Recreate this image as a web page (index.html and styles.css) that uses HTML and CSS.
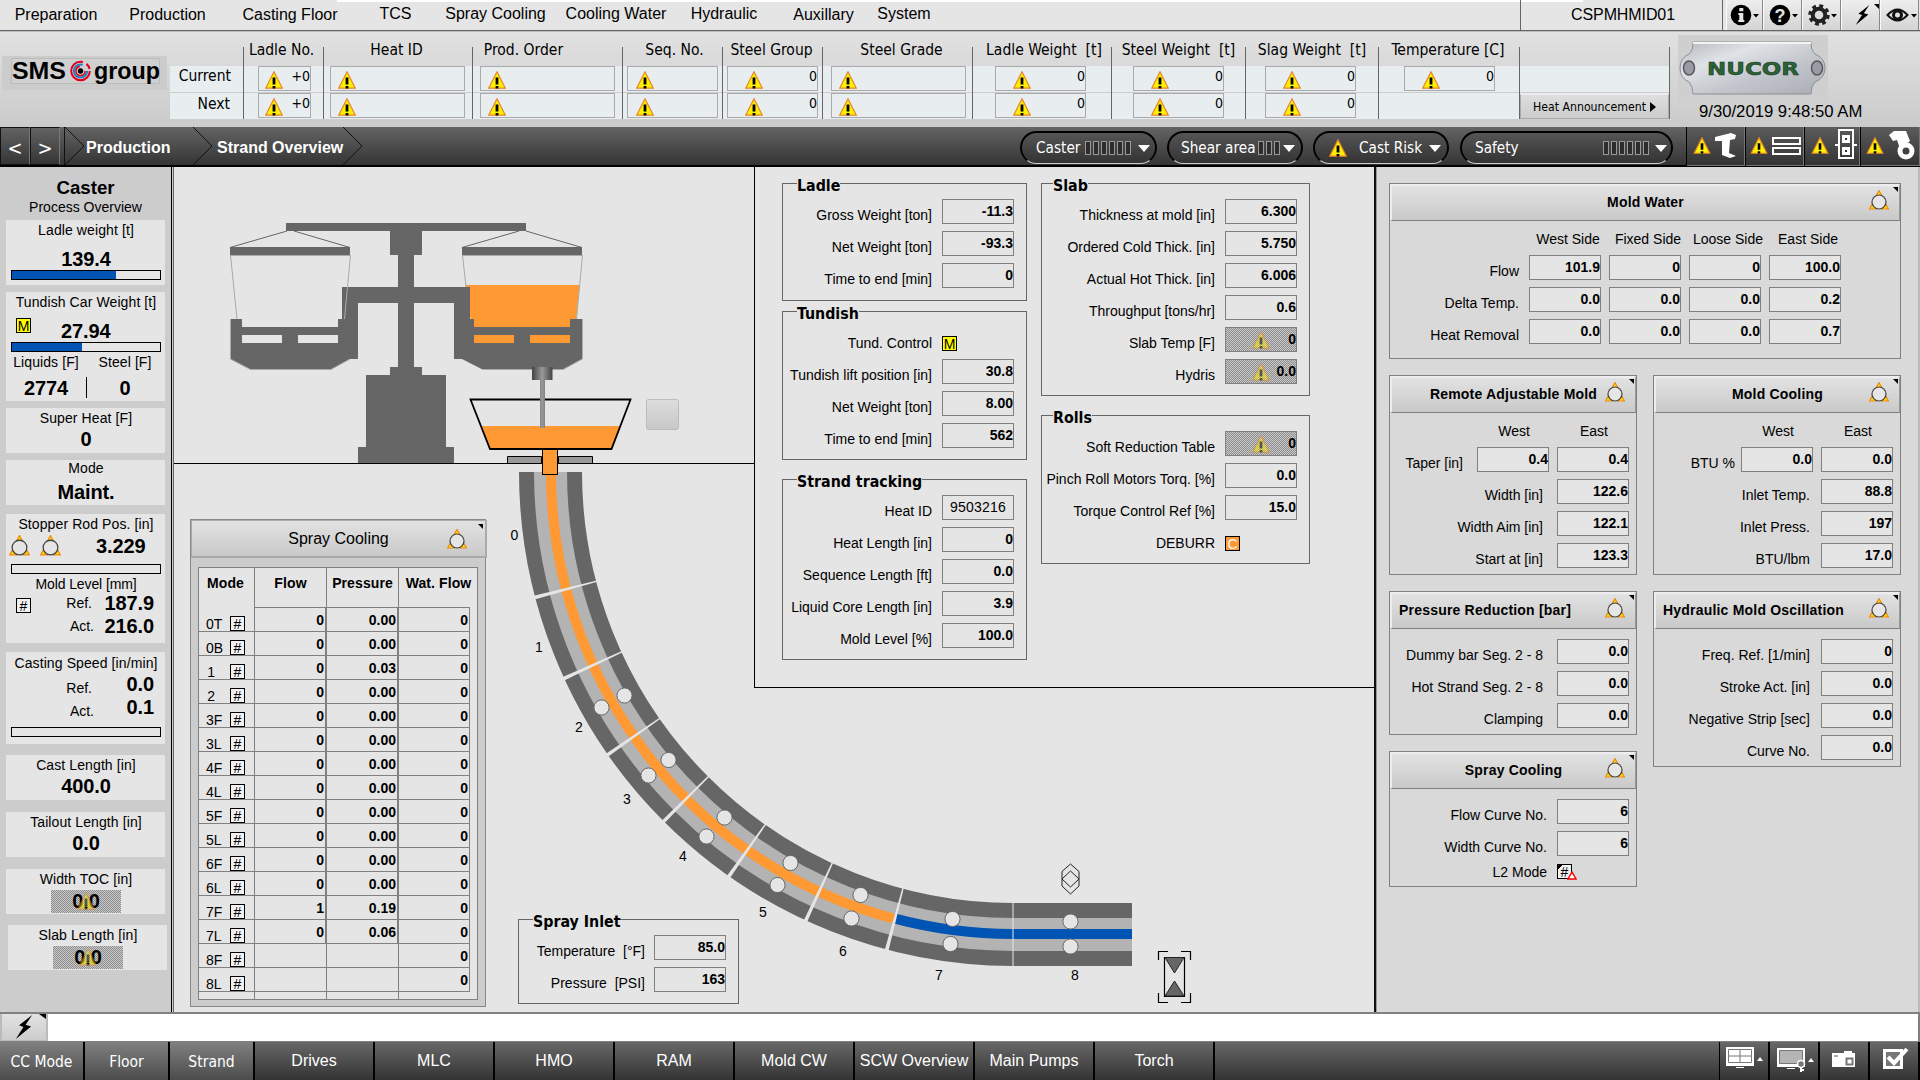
FILE: index.html
```html
<!DOCTYPE html>
<html lang="en">
<head>
<meta charset="utf-8">
<title>Strand Overview</title>
<link rel="stylesheet" href="styles.css">
</head>
<body>
<svg class="defs" width="0" height="0">
  <defs>
    <symbol id="warn" viewBox="0 0 18 18"><path d="M9 .8 17.3 17.2H.7Z" fill="#fff000" stroke="#e8842c" stroke-width="1.2"/><path d="M7.6 6.5h2.8v7H7.6zM7.6 15h2.8v2.6H7.6z" fill="#000"/></symbol>
    <symbol id="alarm" viewBox="0 0 20 20"><path d="M10 .5 13 6H7ZM.6 19 3.8 13 7 19ZM13 19l3.200-6 3.200 6Z" fill="#ffd800" stroke="#ee8a1c" stroke-width="1.200"/><circle cx="10" cy="12" r="7" fill="#e5e5e5" stroke="#444" stroke-width="1.200"/></symbol>
    <symbol id="bolt" viewBox="0 0 16 22"><path d="M15.500 0 3.500 9.500 7.500 11 .5 22 14.500 10.500 9.500 9Z" fill="#000"/></symbol>
    <linearGradient id="steel"><stop offset="0" stop-color="#444"/><stop offset=".5" stop-color="#999"/><stop offset="1" stop-color="#444"/></linearGradient>
    <linearGradient id="btn" x2="0" y2="1"><stop offset="0" stop-color="#ddd"/><stop offset="1" stop-color="#c8c8c8"/></linearGradient>
    <linearGradient id="plate" x2="1" y2="1"><stop offset="0" stop-color="#b4b8bc"/><stop offset=".3" stop-color="#dfe2e6"/><stop offset=".6" stop-color="#c3c6cc"/><stop offset="1" stop-color="#a9acb2"/></linearGradient>
  </defs>
</svg>

<nav class="menu">
  <a class="m1">Preparation</a><a class="m2">Production</a><a class="m3">Casting Floor</a><a class="m4 up">TCS</a><a class="m5 up">Spray Cooling</a><a class="m6 up">Cooling Water</a><a class="m7 up">Hydraulic</a><a class="m8">Auxillary</a><a class="m9 up">System</a>
  <div class="station">CSPMHMID01</div>
  <div class="tools">
    <button class="tool"><svg width="36" height="26"><circle cx="14" cy="13" r="10.300"/><path d="M12.300 6h4v3.200h-4zM11.300 11h5v7h1v2h-6v-2h1v-5h-1z" fill="#e5e5e5"/><path d="M26 12h6l-3 3.500z"/></svg></button>
    <button class="tool"><svg width="36" height="26"><circle cx="16" cy="13" r="10.300"/><text x="16" y="19.500" class="qmark">?</text><path d="M28 12h6l-3 3.500z"/></svg></button>
    <button class="tool"><svg width="36" height="26"><circle cx="16" cy="13" r="9" fill="none" stroke="#222" stroke-width="3.500" stroke-dasharray="3.800 3.270"/><circle cx="16" cy="13" r="6.300" fill="#ddd" stroke="#222" stroke-width="4"/><path d="M28 12h6l-3 3.500z"/></svg></button>
    <button class="tool"><svg width="37" height="26"><use href="#bolt" x="13" y="3" width="15" height="20"/><path d="M32 2h5v5z"/></svg></button>
    <button class="tool"><svg width="37" height="26"><path d="M6.500 13q10-11 20 0-10 11-20 0Z" fill="none" stroke="#111" stroke-width="2"/><circle cx="16.500" cy="13" r="4" fill="none" stroke="#111" stroke-width="3"/><path d="M30 12h6l-3 3.500z"/></svg></button>
  </div>
</nav>

<header class="head">
  <div class="logo"><svg width="168" height="40" viewBox="0 55 168 40">
    <path d="M2 57h165v34H2z" fill="#ccc"/><path d="M11.500 59.500h148v25h-148z" fill="#d0d0d0" stroke="#bbb"/>
    <text x="12" y="79.500" class="sms" textLength="54" lengthAdjust="spacingAndGlyphs">SMS</text>
    <g fill="none"><circle cx="80.500" cy="72" r="9.300" stroke="#e1001a" stroke-width="2" stroke-dasharray="46 4 6 3"/><circle cx="80.500" cy="72" r="6.500" stroke="#1b7fc4" stroke-width="2.200" stroke-dasharray="32 9"/><circle cx="80.500" cy="72" r="4.500" stroke="#e1001a" stroke-width="1.500" stroke-dasharray="20 8"/></g><circle cx="80.500" cy="72" r="2.700"/>
    <text x="94" y="79.500" class="sms" textLength="66" lengthAdjust="spacingAndGlyphs">group</text>
  </svg></div>
  <div class="heats">
    <div class="col c0"><b></b><p>Current</p><p class="nx">Next</p></div>
    <div class="col c1"><b>Ladle No.</b><p class="f"><svg class="w"><use href="#warn"/></svg>+0</p><p class="f"><svg class="w"><use href="#warn"/></svg>+0</p></div>
    <div class="col c2"><b>Heat ID</b><p class="f"><svg class="w"><use href="#warn"/></svg></p><p class="f"><svg class="w"><use href="#warn"/></svg></p></div>
    <div class="col c3"><b>Prod. Order</b><p class="f"><svg class="w"><use href="#warn"/></svg></p><p class="f"><svg class="w"><use href="#warn"/></svg></p></div>
    <div class="col c4"><b>Seq. No.</b><p class="f"><svg class="w"><use href="#warn"/></svg></p><p class="f"><svg class="w"><use href="#warn"/></svg></p></div>
    <div class="col c5"><b>Steel Group</b><p class="f"><svg class="w"><use href="#warn"/></svg>0</p><p class="f"><svg class="w"><use href="#warn"/></svg>0</p></div>
    <div class="col c6"><b>Steel Grade</b><p class="f"><svg class="w"><use href="#warn"/></svg></p><p class="f"><svg class="w"><use href="#warn"/></svg></p></div>
    <div class="col c7"><b>Ladle Weight&nbsp; [t]</b><p class="f"><svg class="w"><use href="#warn"/></svg>0</p><p class="f"><svg class="w"><use href="#warn"/></svg>0</p></div>
    <div class="col c8"><b>Steel Weight&nbsp; [t]</b><p class="f"><svg class="w"><use href="#warn"/></svg>0</p><p class="f"><svg class="w"><use href="#warn"/></svg>0</p></div>
    <div class="col c9"><b>Slag Weight&nbsp; [t]</b><p class="f"><svg class="w"><use href="#warn"/></svg>0</p><p class="f"><svg class="w"><use href="#warn"/></svg>0</p></div>
    <div class="col c10"><b>Temperature [C]</b><p class="f"><svg class="w"><use href="#warn"/></svg>0</p></div>
    <div class="col c11"><button class="announce">Heat Announcement<svg width="6" height="10"><path d="M0 0 6 5 0 10z"/></svg></button></div>
  </div>
  <div class="brand">
    <svg width="150" height="68" viewBox="1678 35 150 68">
      <path d="M1678 35h150v67h-150z" fill="#cfcfcf"/>
      <path d="M1693 42H1811Q1811 51 1815 54 1825 58 1825 68T1815 82Q1811 86 1811 94H1693Q1693 86 1689 82 1680 78 1680 68T1689 54Q1693 51 1693 42Z" fill="url(#plate)" stroke="#8b9097"/>
      <path d="M1693 43H1811" stroke="#f4f4f4" stroke-width="2"/>
      <g fill="#999ca2" stroke="#555a60" stroke-width="1.500"><ellipse cx="1689" cy="68" rx="5.500" ry="7"/><ellipse cx="1817" cy="68" rx="5.500" ry="7"/></g>
      <text x="1707" y="74.500" class="nucor" textLength="92" lengthAdjust="spacingAndGlyphs">NUCOR</text>
    </svg>
    <time>9/30/2019 9:48:50 AM</time>
  </div>
</header>

<div class="bar">
  <button class="hist">&lt;</button><button class="hist">&gt;</button>
  <div class="crumbs">
    <span class="cr1">Production</span><span class="cr2">Strand Overview</span>
    <svg width="320" height="38"><g fill="none" stroke="#111"><path d="M4.500 0v38M5 0 24 19 5 38M133 0 152 19 133 38M283 0 302 19 283 38"/></g></svg>
  </div>
  <div class="pill p1"><span>Caster</span><i class="seg"></i><svg width="12" height="7"><path d="M0 0h12L6 7z"/></svg></div>
  <div class="pill p2"><span>Shear area</span><i class="seg"></i><svg width="12" height="7"><path d="M0 0h12L6 7z"/></svg></div>
  <div class="pill p3"><svg class="w"><use href="#warn"/></svg><span>Cast Risk</span><svg width="12" height="7"><path d="M0 0h12L6 7z"/></svg></div>
  <div class="pill p4"><span>Safety</span><i class="seg"></i><svg width="12" height="7"><path d="M0 0h12L6 7z"/></svg></div>
  <div class="stats">
    <div class="stat s1"><svg width="56" height="38"><use href="#warn" x="6" y="10" width="18" height="17"/><path d="M28 10 44 6 49 8 48 12 43 13 42 26 49 29 43 31 35 28V14L28 14Z" fill="#fff"/></svg></div>
    <div class="stat s2"><svg width="56" height="38"><use href="#warn" x="4" y="10" width="18" height="17"/><path d="M27 11h27v6H27zM27 21h27v6H27z" fill="none" stroke="#fff" stroke-width="2"/></svg></div>
    <div class="stat s3"><svg width="54" height="38"><use href="#warn" x="6" y="10" width="18" height="17"/><path d="M34 3h14v28H34zM30 18h4M48 18h4" fill="none" stroke="#fff" stroke-width="2"/><path d="M37 8h8v8h-8zM37 20h8v8h-8z" fill="#fff"/><path d="M40 11h2v2h-2zM40 23h2v2h-2z" fill="#333"/></svg></div>
    <div class="stat s4"><svg width="57" height="38"><use href="#warn" x="5" y="10" width="18" height="17"/><path d="M28 8 33 4H45L49 14 39 22 36 13 32 14Z" fill="#fff"/><circle cx="45" cy="24" r="6" fill="none" stroke="#fff" stroke-width="5"/></svg></div>
  </div>
</div>

<main class="main">
<aside class="left">
  <h2>Caster</h2><h3>Process Overview</h3>
  <section class="card k1"><label>Ladle weight [t]</label><strong>139.4</strong><div class="gauge"><i style="width:104px"></i></div></section>
  <section class="card k2"><label>Tundish Car Weight [t]</label><div class="tcw"><span class="box yel">M</span><strong>27.94</strong></div><div class="gauge"><i style="width:70px"></i></div>
    <div class="pair"><div><label>Liquids [F]</label><strong>2774</strong></div><div><label>Steel [F]</label><strong>0</strong></div></div></section>
  <section class="card k3"><label>Super Heat [F]</label><strong>0</strong></section>
  <section class="card k3 k4"><label>Mode</label><strong>Maint.</strong></section>
  <section class="card k5"><label>Stopper Rod Pos. [in]</label>
    <div class="rod"><svg class="al"><use href="#alarm"/></svg><svg class="al"><use href="#alarm"/></svg><strong>3.229</strong></div>
    <div class="gauge"></div><label class="ml">Mold Level [mm]</label>
    <div class="refs"><span class="box">#</span><div><em>Ref.</em><em>Act.</em></div><div><strong>187.9</strong><strong>216.0</strong></div></div></section>
  <section class="card k6"><label>Casting Speed [in/min]</label>
    <div class="refs"><div><em>Ref.</em><em>Act.</em></div><div><strong>0.0</strong><strong>0.1</strong></div></div><div class="gauge"></div></section>
  <section class="card k3 k7"><label>Cast Length [in]</label><strong>400.0</strong></section>
  <section class="card k3 k8"><label>Tailout Length [in]</label><strong>0.0</strong></section>
  <section class="card k3 k9"><label>Width TOC [in]</label><strong class="off">0.0<svg class="w"><use href="#warn"/></svg></strong></section>
  <section class="card k3 k10"><label>Slab Length [in]</label><strong class="off">0.0<svg class="w"><use href="#warn"/></svg></strong></section>
</aside>

<div class="canvas">
  <svg class="plant" width="1200" height="845" viewBox="174 167 1200 845">
    <path d="M174 463.500H754" stroke="#000"/>
    <path d="M465.600 285H579.500L574 343H474Z" fill="#f93"/>
    <g fill="#666">
      <path d="M286 223h240v8H422v24h-8v32h56v72h-16v-56h-40v64h8v8h24v72h8v16h-96v-16h8v-72h24v-8h8v-64h-40v56h-16v-72h56v-32h-8v-24H286z"/>
      <path id="lid" d="M230 247h120v8H230z"/>
      <path id="cup" fill-rule="evenodd" d="M230 319h12v8h96v-8h12v40l-19 10.500h-80.500L230 359zM242 335v8h40v-8zM298 335v8h40v-8z"/>
      <use href="#lid" x="232"/><use href="#cup" x="232"/>
    </g>
    <g fill="none" stroke="#666"><path d="M287 231 230 247.500M294 231 350 247.500M519 231 462 247.500M526 231 582 247.500"/><path stroke="#aaa" d="M230.500 255 237 319M350.500 255 344.500 319M230 255.500H350M462.500 255 466 287M582.500 255 576.500 319M462 255.500H582M230.500 319V359L250.500 369.500H331L350 359M582.500 319V359L563 369.500H482.500"/></g>
    <path d="M481.500 426H620L611.500 448H490Z" fill="#f93"/>
    <path d="M470.500 399.500H630.500L611.500 449H490Z" fill="none" stroke="#000" stroke-width="1.800"/>
    <path d="M532 367h20.500v13H532zM540 380h5v48h-5z" fill="url(#steel)"/>
    <path d="M507.500 456.500h34v7h-34zM558.500 456.500h34v7h-34z" fill="#999" stroke="#000"/>
    <rect x="646.500" y="399.500" width="32" height="30" rx="2" fill="url(#btn)" stroke="#bbb"/>
    <g fill="none">
      <path d="M550.500 472A462.500 462.500 0 0 0 1013 934.500H1132" stroke="#666" stroke-width="63"/>
      <path d="M550.500 472A462.500 462.500 0 0 0 1013 934.500H1132" stroke="#b3b3b3" stroke-width="33"/>
      <path d="M551 472A462 462 0 0 0 895 919" stroke="#f93" stroke-width="10"/>
      <path d="M895 918.700A462 462 0 0 0 1013 934H1132" stroke="#0054b4" stroke-width="10"/>
    </g>
    <g fill="#e5e5e5" transform="translate(1013 472)">
      <path d="M-496-1.900-430-.7V.7L-496 1.900Z" transform="rotate(-14.700)"/>
      <path d="M-496-1.900-430-.7V.7L-496 1.900Z" transform="rotate(-24.700)"/>
      <path d="M-496-1.900-430-.7V.7L-496 1.900Z" transform="rotate(-34.900)"/>
      <path d="M-496-1.900-430-.7V.7L-496 1.900Z" transform="rotate(-45)"/>
      <path d="M-496-1.900-430-.7V.7L-496 1.900Z" transform="rotate(-54.900)"/>
      <path d="M-496-1.900-430-.7V.7L-496 1.900Z" transform="rotate(-65.200)"/>
      <path d="M-496-1.900-430-.7V.7L-496 1.900Z" transform="rotate(-75.200)"/>
      <path d="M-.5 430h1v66h-1z"/>
    </g>
    <rect x="542.500" y="449.500" width="15" height="25" fill="#f93" stroke="#000"/>
    <g fill="#e5e5e5" stroke="#666">
      <circle cx="601.500" cy="707.500" r="7.600"/><circle cx="624.500" cy="695.500" r="7.600"/><circle cx="648.500" cy="775.500" r="7.600"/><circle cx="668.500" cy="760" r="7.600"/><circle cx="706.500" cy="836.500" r="7.600"/><circle cx="724.500" cy="817.500" r="7.600"/><circle cx="777.500" cy="885" r="7.600"/><circle cx="790.500" cy="863" r="7.600"/><circle cx="851.500" cy="918.500" r="7.600"/><circle cx="860.500" cy="895" r="7.600"/><circle cx="950.500" cy="944" r="7.600"/><circle cx="952.500" cy="919" r="7.600"/><circle cx="1070.500" cy="946.500" r="7.600"/><circle cx="1070.500" cy="921.500" r="7.600"/>
    </g>
    <g class="segno"><text x="514.500" y="540">0</text><text x="539" y="652">1</text><text x="579" y="732">2</text><text x="627" y="804">3</text><text x="683" y="860.500">4</text><text x="763" y="916.500">5</text><text x="843" y="956">6</text><text x="939" y="980">7</text><text x="1075" y="980">8</text></g>
    <path d="M1070.500 864 1079 871.500V886L1070.500 894 1062 886V871.500ZM1070.500 871 1079 879 1070.500 887 1062 879Z" fill="none" stroke="#222"/>
    <path d="M1158.500 960V951.500H1168M1181 951.500H1190.500V960M1158.500 993V1002.500H1168M1181 1002.500H1190.500V993M1164.500 957.500h20v39h-20z" fill="none" stroke="#000" stroke-width="1.200"/>
    <path d="M1165 957.500h19L1174.500 973ZM1165 996h19L1174.500 981Z" fill="#666" stroke="#222"/>
  </svg>

  <div class="info">
    <div>
      <fieldset class="grp g1"><b class="lg">Ladle</b>
        <div class="row"><span>Gross Weight [ton]</span><output>-11.3</output></div>
        <div class="row"><span>Net Weight [ton]</span><output>-93.3</output></div>
        <div class="row"><span>Time to end [min]</span><output>0</output></div></fieldset>
      <fieldset class="grp g2"><b class="lg">Tundish</b>
        <div class="row"><span>Tund. Control</span><div class="slot"><i class="box yel">M</i></div></div>
        <div class="row"><span>Tundish lift position [in]</span><output>30.8</output></div>
        <div class="row"><span>Net Weight [ton]</span><output>8.00</output></div>
        <div class="row"><span>Time to end [min]</span><output>562</output></div></fieldset>
      <fieldset class="grp g3"><b class="lg">Strand tracking</b>
        <div class="row"><span>Heat ID</span><output class="plain">9503216</output></div>
        <div class="row"><span>Heat Length [in]</span><output>0</output></div>
        <div class="row"><span>Sequence Length [ft]</span><output>0.0</output></div>
        <div class="row"><span>Liquid Core Length [in]</span><output>3.9</output></div>
        <div class="row"><span>Mold Level [%]</span><output>100.0</output></div></fieldset>
    </div>
    <div>
      <fieldset class="grp g4"><b class="lg">Slab</b>
        <div class="row"><span>Thickness at mold [in]</span><output>6.300</output></div>
        <div class="row"><span>Ordered Cold Thick. [in]</span><output>5.750</output></div>
        <div class="row"><span>Actual Hot Thick. [in]</span><output>6.006</output></div>
        <div class="row"><span>Throughput [tons/hr]</span><output>0.6</output></div>
        <div class="row"><span>Slab Temp [F]</span><output class="off"><svg class="w"><use href="#warn"/></svg>0</output></div>
        <div class="row"><span>Hydris</span><output class="off"><svg class="w"><use href="#warn"/></svg>0.0</output></div></fieldset>
      <fieldset class="grp g5"><b class="lg">Rolls</b>
        <div class="row"><span>Soft Reduction Table</span><output class="off"><svg class="w"><use href="#warn"/></svg>0</output></div>
        <div class="row"><span>Pinch Roll Motors Torq. [%]</span><output>0.0</output></div>
        <div class="row"><span>Torque Control Ref [%]</span><output>15.0</output></div>
        <div class="row"><span>DEBURR</span><div class="slot"><i class="box ora">C</i></div></div></fieldset>
    </div>
  </div>

  <div class="lower">
    <section class="spray">
      <div class="sphead">Spray Cooling<svg class="al"><use href="#alarm"/></svg></div>
      <div class="tbl">
        <div class="tr th"><b>Mode</b><b>Flow</b><b>Pressure</b><b>Wat. Flow</b></div>
        <div class="tr"><span>0T<i class="box">#</i></span><b>0</b><b>0.00</b><b>0</b></div>
        <div class="tr"><span>0B<i class="box">#</i></span><b>0</b><b>0.00</b><b>0</b></div>
        <div class="tr"><span>&hairsp;1<i class="box">#</i></span><b>0</b><b>0.03</b><b>0</b></div>
        <div class="tr"><span>&hairsp;2<i class="box">#</i></span><b>0</b><b>0.00</b><b>0</b></div>
        <div class="tr"><span>3F<i class="box">#</i></span><b>0</b><b>0.00</b><b>0</b></div>
        <div class="tr"><span>3L<i class="box">#</i></span><b>0</b><b>0.00</b><b>0</b></div>
        <div class="tr"><span>4F<i class="box">#</i></span><b>0</b><b>0.00</b><b>0</b></div>
        <div class="tr"><span>4L<i class="box">#</i></span><b>0</b><b>0.00</b><b>0</b></div>
        <div class="tr"><span>5F<i class="box">#</i></span><b>0</b><b>0.00</b><b>0</b></div>
        <div class="tr"><span>5L<i class="box">#</i></span><b>0</b><b>0.00</b><b>0</b></div>
        <div class="tr"><span>6F<i class="box">#</i></span><b>0</b><b>0.00</b><b>0</b></div>
        <div class="tr"><span>6L<i class="box">#</i></span><b>0</b><b>0.00</b><b>0</b></div>
        <div class="tr"><span>7F<i class="box">#</i></span><b>1</b><b>0.19</b><b>0</b></div>
        <div class="tr"><span>7L<i class="box">#</i></span><b>0</b><b>0.06</b><b>0</b></div>
        <div class="tr e"><span>8F<i class="box">#</i></span><b></b><b></b><b>0</b></div>
        <div class="tr e"><span>8L<i class="box">#</i></span><b></b><b></b><b>0</b></div>
        <div class="tail"><b></b><b></b><b></b><b></b></div>
      </div>
    </section>
    <fieldset class="grp inlet"><b class="lg">Spray Inlet</b>
      <div class="row"><span>Temperature&nbsp; [°F]</span><output>85.0</output></div>
      <div class="row"><span>Pressure&nbsp; [PSI]</span><output>163</output></div></fieldset>
  </div>
</div>

<aside class="right">
  <section class="pn water"><h4>Mold Water<svg class="al"><use href="#alarm"/></svg></h4>
    <div class="heads"><span>West Side</span><span>Fixed Side</span><span>Loose Side</span><span>East Side</span></div>
    <div class="row"><span>Flow</span><output>101.9</output><output>0</output><output>0</output><output>100.0</output></div>
    <div class="row"><span>Delta Temp.</span><output>0.0</output><output>0.0</output><output>0.0</output><output>0.2</output></div>
    <div class="row"><span>Heat Removal</span><output>0.0</output><output>0.0</output><output>0.0</output><output>0.7</output></div></section>
  <div class="cols">
    <div>
      <section class="pn ram"><h4>Remote Adjustable Mold<svg class="al"><use href="#alarm"/></svg></h4>
        <div class="heads"><span>West</span><span>East</span></div>
        <div class="row"><span>Taper [in]</span><output>0.4</output><output>0.4</output></div>
        <div class="row"><span>Width [in]</span><output>122.6</output></div>
        <div class="row"><span>Width Aim [in]</span><output>122.1</output></div>
        <div class="row"><span>Start at [in]</span><output>123.3</output></div></section>
      <section class="pn pres"><h4 class="lft">Pressure Reduction [bar]<svg class="al"><use href="#alarm"/></svg></h4>
        <div class="row"><span>Dummy bar Seg. 2 - 8</span><output>0.0</output></div>
        <div class="row"><span>Hot Strand Seg. 2 - 8</span><output>0.0</output></div>
        <div class="row"><span>Clamping</span><output>0.0</output></div></section>
      <section class="pn sc"><h4>Spray Cooling<svg class="al"><use href="#alarm"/></svg></h4>
        <div class="row"><span>Flow Curve No.</span><output>6</output></div>
        <div class="row"><span>Width Curve No.</span><output>6</output></div>
        <div class="row l2"><span>L2 Mode</span><div class="slot"><i class="box">#</i><svg width="10" height="9"><path d="M5 1 9 8H1Z" fill="#fff" stroke="red" stroke-width="1.500"/></svg></div></div></section>
    </div>
    <div>
      <section class="pn ram mc"><h4>Mold Cooling<svg class="al"><use href="#alarm"/></svg></h4>
        <div class="heads"><span>West</span><span>East</span></div>
        <div class="row btu"><span>BTU %</span><output>0.0</output><output>0.0</output></div>
        <div class="row"><span>Inlet Temp.</span><output>88.8</output></div>
        <div class="row"><span>Inlet Press.</span><output>197</output></div>
        <div class="row"><span>BTU/lbm</span><output>17.0</output></div></section>
      <section class="pn hmo"><h4 class="lft">Hydraulic Mold Oscillation<svg class="al"><use href="#alarm"/></svg></h4>
        <div class="row"><span>Freq. Ref. [1/min]</span><output>0</output></div>
        <div class="row"><span>Stroke Act. [in]</span><output>0.0</output></div>
        <div class="row"><span>Negative Strip [sec]</span><output>0.0</output></div>
        <div class="row"><span>Curve No.</span><output>0.0</output></div></section>
    </div>
  </div>
</aside>
</main>

<div class="msg"><button><svg width="44" height="26"><use href="#bolt" x="13" y="1" width="18" height="24"/><path d="M37 0h7v5z"/></svg></button></div>

<footer class="foot">
  <a class="n">CC Mode</a><a class="n">Floor</a><a class="n">Strand</a><a class="dn">Drives</a><a>MLC</a><a>HMO</a><a>RAM</a><a>Mold CW</a><a>SCW Overview</a><a>Main Pumps</a><a>Torch</a>
  <div class="sp"></div>
  <i><svg width="48" height="38"><path d="M6 5h28v19H6zM16 25h8v1h-8z" fill="#fff"/><path d="M8.500 7.500h23v13h-23zM20 8v12M9 14h22" fill="none" stroke="#777"/><path d="M37 19h6l-3-4z" fill="#fff"/></svg></i>
  <i><svg width="48" height="38"><path d="M7 6h28v19H7zM17 26h8v1h-8z" fill="#fff"/><path d="M9.500 8.500h23v13h-23z" fill="#b5b5b5" stroke="#777"/><circle cx="31" cy="22" r="3.500" fill="#777" stroke="#fff" stroke-width="1.500"/><path d="M30 25h2v5h-2zM32 27h2v2h-2z" fill="#fff"/><path d="M38 20h6l-3-4z" fill="#fff"/></svg></i>
  <i><svg width="48" height="38"><path d="M12 11h12V9h8v2h3v14H12z" fill="#fff"/><path d="M14 14h4" stroke="#555"/><rect x="26.500" y="16.500" width="6" height="6" fill="#fff" stroke="#777" stroke-width="2"/></svg></i>
  <i><svg width="48" height="38"><path d="M13 7h20v20H13z" fill="#fff"/><path d="M16 10h14v14H16z" fill="#777"/><path d="M18 15 24 21 37 7" fill="none" stroke="#fff" stroke-width="4"/></svg></i>
</footer>
</body>
</html>
```

FILE: styles.css
```css
* { box-sizing: border-box; }
body { margin: 0; width: 1920px; height: 1080px; overflow: hidden; display: flex; flex-direction: column; background: #ccc; color: #000; font: 14px "Liberation Sans", Arial, sans-serif; }
.defs { position: absolute; }
button { font: inherit; padding: 0; margin: 0; border: 0; background: none; color: inherit; display: block; }
svg { display: block; flex: none; }
p, h2, h3, h4, fieldset { margin: 0; padding: 0; min-width: 0; }
i, em { font-style: normal; }
svg.w { width: 18px; height: 18px; }
svg.al { width: 20px; height: 20px; }

/* menu */
.menu { height: 31px; flex: none; display: flex; border-bottom: 1px solid #666; background: linear-gradient(#fff, #fff) 337px 0 / 1246px 2px no-repeat #e5e5e5; font-size: 16px; line-height: 30px; }
.menu a { text-align: center; white-space: nowrap; }
.menu a.up { line-height: 28px; }
.m1 { width: 112px; } .m2 { width: 111px; } .m3 { width: 134px; } .m4 { width: 77px; } .m5 { width: 123px; } .m6 { width: 118px; } .m7 { width: 98px; } .m8 { width: 101px; } .m9 { width: 60px; }
.station { margin-left: auto; width: 203px; border: 1px solid #666; border-width: 0 1px; text-align: center; letter-spacing: -.1px; padding-left: 3px; }
.tools { display: flex; padding-left: 3px; width: 197px; }
.tool { width: 39px; height: 30px; flex: none; border-left: 1px solid #fafafa; border-right: 1px solid #888; background: linear-gradient(#eee, #d4d4d4); }
.tool:first-child { width: 37px; }
.qmark { font: bold 18px "Liberation Sans", sans-serif; fill: #e5e5e5; text-anchor: middle; }

/* header */
.head { height: 96px; flex: none; display: flex; border-top: 1px solid #bbb; background: linear-gradient(#e1e1e1, #cbcbcb); }
.logo { width: 170px; padding-top: 22px; }
.sms { font: bold 24px "Liberation Sans", sans-serif; }
.heats { width: 1500px; display: flex; font: 15.500px "DejaVu Sans Condensed", "DejaVu Sans", sans-serif; background: linear-gradient(transparent 34px, #e8eef0 34px, #e8eef0 60px, #ccc 60px, #ccc 61px, #e8eef0 61px, #e8eef0 87px, transparent 87px); }
.col { margin-top: 15px; height: 72px; border-left: 1px solid #666; flex: none; }
.col b { display: block; height: 27px; margin-top: -8px; line-height: 22px; font-weight: normal; text-align: center; white-space: pre; }
.col p { height: 27px; line-height: 21px; text-align: right; }
.c0 { width: 73px; border-left: 0; padding-right: 12px; }
.c0 .nx { line-height: 23px; padding-right: 1px; }
.col .f { height: 25px; margin-bottom: 2px; line-height: 19px; border: 1px solid #aaa; display: flex; justify-content: space-between; padding-left: 7px; width: 135px; font-size: 14px; }
.f .w { margin-top: 4px; }
.c1 { width: 80px; } .col.c1 .f { margin-left: 14px; width: 53px; padding-left: 6px; } .c1 b { margin-left: -4px; }
.c2 { width: 149px; } .c2 .f { margin-left: 6px; } .c2 b { margin-right: 3px; }
.c3 { width: 150px; } .c3 .f { margin-left: 7px; } .c3 b { padding-right: 48px; }
.c4 { width: 100px; } .col.c4 .f { margin-left: 4px; width: 91px; padding-left: 8px; } .c4 b { margin-left: 4px; }
.c5 { width: 100px; } .col.c5 .f { margin-left: 4px; width: 91px; padding-left: 17px; } .c5 b { margin-right: 2px; }
.c6 { width: 150px; } .c6 .f { margin-left: 8px; } .c6 b { margin-left: 8px; }
.c7 { width: 139px; } .col.c7 .f { margin-left: 22px; width: 91px; padding-left: 17px; } .c7 b { margin-left: 4px; }
.c8 { width: 134px; } .col.c8 .f { margin-left: 21px; width: 91px; padding-left: 17px; }
.c9 { width: 133px; } .col.c9 .f { margin-left: 19px; width: 91px; padding-left: 17px; }
.c10 { width: 141px; } .col.c10 .f { margin-left: 25px; width: 91px; padding-left: 17px; } .c10 b { margin-right: 2px; }
.c11 { width: 151px; border-right: 1px solid #666; padding-top: 47px; }
.announce { width: 149px; height: 25px; display: flex; align-items: center; justify-content: center; gap: 4px; font-size: 12.200px; border: 1px solid #aaa; border-top-color: #eee; background: linear-gradient(#dedede, #ccc); }
.brand { flex: 1; padding: 3px 0 0 8px; }
.nucor { font: bold 17px "DejaVu Sans", sans-serif; fill: #2c6238; stroke: #163a20; stroke-width: .5px; }
.brand time { display: block; font-size: 16.700px; line-height: 18px; padding-left: 21px; }

/* breadcrumb bar */
.bar { height: 40px; flex: none; display: flex; align-items: flex-start; background: linear-gradient(#646464, #343434); border-bottom: 2px solid #000; color: #fff; font: 15.200px "DejaVu Sans Condensed", "DejaVu Sans", sans-serif; }
.hist { width: 30px; height: 38px; border: 1px solid #111; border-right-color: #777; font: 20px/40px "DejaVu Sans Condensed", sans-serif; flex: none; }
.crumbs { width: 960px; height: 38px; font: bold 16px/41px "Liberation Sans", sans-serif; position: relative; display: flex; padding-left: 26px; }
.crumbs svg { position: absolute; left: 0; top: 0; }
.cr1 { width: 131px; }
.pill { height: 33px; margin-top: 4px; border: 2px solid #000; border-bottom: 1px solid #ccc; border-radius: 17px; display: flex; align-items: center; flex: none; background: linear-gradient(#555, #333); padding-left: 14px; white-space: nowrap; }
.pill > svg:not(.w) { fill: #fff; }
.seg { height: 14px; width: 46px; border: 1px solid #999; border-width: 1px 0; background: repeating-linear-gradient(90deg, #999 0 1px, #2d2d2d 1px 5px, #999 5px 6px, transparent 6px 8px); -webkit-mask: repeating-linear-gradient(90deg, #000 0 6px, transparent 6px 8px); mask: repeating-linear-gradient(90deg, #000 0 6px, transparent 6px 8px); }
.p1 { width: 137px; margin-right: 10px; } .p1 .seg { margin: 0 7px 0 5px; }
.p2 { width: 136px; margin-right: 10px; padding-left: 12px; } .p2 .seg { width: 22px; margin: 0 3px 0 2px; }
.p3 { width: 136px; margin-right: 11px; } .p3 span { margin: 0 7px 0 12px; }
.p4 { width: 213px; padding-left: 13px; } .p4 .seg { margin: 0 6px 0 auto; } .p4 > svg { margin-right: 4px; }
.stats { margin-left: auto; display: flex; height: 40px; width: 234px; background: #000; }
.stat { border: 1px solid #777; border-width: 0 1px 1px 0; margin-left: 1px; background: linear-gradient(#5c5c5c, #333); height: 39px; }
.s1 { width: 58px; } .s2 { width: 58px; } .s3 { width: 55px; } .s4 { width: 59px; }

/* main area */
.main { height: 845px; flex: none; display: flex; }
.left { width: 174px; flex: none; background: #ccc; border-right: 1px solid #666; box-shadow: inset -1px 0 #ccc, inset -2px 0 #000; padding: 8px 0 0 6px; }
.left h2 { font-size: 18.700px; line-height: 26px; height: 24px; width: 159px; text-align: center; }
.left h3 { font-size: 14px; font-weight: normal; line-height: 16px; height: 21px; width: 159px; text-align: center; }
.card { width: 159px; background: #e5e5e5; margin-bottom: 7px; padding: 2px 4px 0 5px; text-align: center; }
.card label { display: block; line-height: 16px; letter-spacing: .1px; white-space: nowrap; }
.card strong { display: block; font-size: 20px; line-height: 26px; height: 24px; letter-spacing: -.1px; }
.gauge { height: 10px; border: 1px solid #000; background: #e5e5e5; }
.gauge i { display: block; height: 8px; background: #0054b4; }
.k1 { height: 65px; } .card.k1 strong { padding-top: 10px; line-height: 22px; height: 32px; }
.k2 { height: 109px; }
.tcw { display: flex; height: 32px; padding: 8px 0 0 5px; gap: 30px; } .tcw strong { padding-top: 2px; line-height: 24px; }
.card.k2 .tcw strong { line-height: 23px; }
.pair { display: grid; grid-template-columns: 70px 80px; padding-top: 2px; background: linear-gradient(#000, #000) 75px 25px / 1px 21px no-repeat; height: 50px; }
.card .pair strong { line-height: 36px; height: 34px; } .pair div:last-child label { padding-left: 8px; } .pair div:last-child strong { padding-left: 8px; }
.k3 { height: 45px; } .k4 { margin-bottom: 9px; } .k4 label { line-height: 13px; } .card.k4 strong { line-height: 34px; height: 30px; }
.k5 { height: 129px; margin-bottom: 9px; }
.rod { height: 32px; display: flex; padding-top: 3px; margin-left: -2px; gap: 10px; } .rod strong { margin-left: 25px; margin-top: -2px; }
.rod svg { width: 21px; height: 21px; }
.card .ml { line-height: 20px; letter-spacing: -.1px; }
.refs { display: grid; grid-template-columns: 50px 33px 60px; text-align: right; }
.refs em { display: block; line-height: 23px; } .refs em:first-child { padding-right: 2px; line-height: 19px; padding-bottom: 2px; }
.card .refs strong { line-height: 22px; margin-top: -2px; height: 25px; }
.refs .box { margin: 4px 0 0 5px; }
.k6 { height: 92px; margin-bottom: 11px; } .k6 .refs { grid-template-columns: 83px 60px; height: 56px; padding-top: 4px; } .k6 em { position: relative; top: 4px; } .k6 label { padding-top: 1px; }
.k7, .k8 { margin-bottom: 12px; } .k9 { margin-bottom: 11px; } .k10 { margin-left: 2px; }
.off { background: repeating-conic-gradient(#8e8e8e 0 25%, #c8c8c8 0 50%) 0 0 / 2px 2px; }
.card .off { width: 70px; height: 23px; line-height: 22px; margin: 3px auto 0 40px; position: relative; }
.card .off svg { position: absolute; left: 26px; top: 2px; opacity: .5; }
.box { display: inline-block; width: 15px; height: 15px; border: 1px solid #000; font: 14px/14px "Liberation Sans", sans-serif; text-align: center; background: #f2f2f2; }
.yel { background: #ff0; } .ora { background: #f93; color: #fff; }

.canvas { width: 1200px; flex: none; background: #e5e5e5; position: relative; }
.plant { position: absolute; left: 0; top: 0; }
.segno text { font: 14px "Liberation Sans", sans-serif; text-anchor: middle; }
.info { position: relative; margin-left: 580px; height: 521px; width: 620px; border: 1px solid #000; border-width: 0 0 1px 1px; background: #e5e5e5; display: flex; gap: 14px; padding: 16px 0 0 27px; }
.grp { position: relative; border: 1px solid #666; padding: 15px 12px 0 0; }
.lg { position: absolute; left: 14px; top: -8px; line-height: 20px; white-space: nowrap; background: #e5e5e5; font: bold 15.800px/20px "DejaVu Sans Condensed", "DejaVu Sans", sans-serif; }
.g1 { width: 245px; height: 118px; margin-bottom: 10px; } .g2 { width: 245px; height: 149px; margin-bottom: 19px; } .g3 { width: 245px; height: 181px; }
.g4 { width: 269px; height: 213px; margin-bottom: 19px; } .g5 { width: 269px; height: 149px; } .g4 .lg, .g5 .lg { left: 11px; }
.row { display: flex; justify-content: flex-end; height: 25px; margin-bottom: 7px; white-space: nowrap; }
.row span { line-height: 18px; padding: 7px 10px 0 0; }
.row output { width: 72px; height: 25px; border: 1px solid #808080; font-weight: bold; line-height: 23px; text-align: right; background-color: #e5e5e5; }
.row output.plain { font-weight: normal; padding-right: 7px; letter-spacing: .2px; }
.row output.off { display: flex; justify-content: space-between; padding-left: 26px; background-color: transparent; }
.row output .w { margin-top: 3px; opacity: .5; }
.slot { width: 72px; padding-top: 9px; display: flex; }

.lower { position: absolute; left: 16px; top: 352px; display: flex; gap: 32px; align-items: flex-end; }
.spray { width: 296px; height: 488px; background: #ccc; border: 1px solid #888; }
.sphead, .pn h4 { position: relative; background: linear-gradient(#e2e2e2, #c9c9c9); }
.sphead { height: 38px; font-size: 16px; line-height: 36px; text-align: center; border: 1px solid #aaa; border-width: 1px 2px 2px 1px; margin-right: -2px; }
.sphead .al { position: absolute; right: 18px; top: 8px; }
.sphead::after, .pn h4::after { content: ""; position: absolute; right: 2px; top: 3px; width: 5px; height: 5px; background: #000; clip-path: polygon(0 0, 100% 0, 100% 100%); }
.tbl { margin: 9px 0 0 7px; width: 280px; height: 433px; border: 1px solid #808080; background: #e5e5e5; }
.tr { display: grid; grid-template-columns: 55px 72px 72px 72px; grid-template-rows: 100%; height: 24px; border-bottom: 1px solid #808080; width: 271px; line-height: 24px; }
.tr b { text-align: right; border-left: 1px solid #808080; padding-right: 1px; border-right: 1px solid #808080; }
.tr span { padding-left: 7px; line-height: 32px; display: flex; justify-content: space-between; padding-right: 9px; height: 23px; }
.tr .box { margin-top: 8px; height: 15px; }
.th { height: 40px; width: 279px; grid-template-columns: 55px 72px 72px 80px; line-height: 31px; border: 0; }
.th b { text-align: center; border-right: 0; border-bottom: 1px solid #808080; letter-spacing: .1px; padding: 0; white-space: nowrap; }
.th b:first-child { border: 0; padding-right: 2px; } .th b:last-child { border-bottom: 0; background: linear-gradient(#808080, #808080) 0 100% / 71px 1px no-repeat; }
.tr.e b:nth-child(-n+3) { border-right: 0; }
.tail { display: grid; grid-template-columns: 55px 72px 72px 72px; height: 7px; } .tail b + b { border-left: 1px solid #808080; }
.inlet { width: 221px; height: 85px; margin-bottom: 3px; }
.inlet .row span { padding-right: 9px; }

.right { flex: 1; background: #d9d9d9; border-left: 2px solid #111; box-shadow: inset -2px 0 #bbb, inset 1px 0 #999; padding: 16px 0 0 13px; }
.pn { width: 248px; border: 1px solid #808080; margin-bottom: 16px; padding-right: 7px; }
.pn h4 { height: 37px; margin-right: -7px; font-size: 14px; line-height: 32px; text-align: center; letter-spacing: .2px; border: 2px solid #eee; border-width: 2px 1px 1px 2px; border-right-color: #999; border-bottom-color: #808080; margin-bottom: 10px; }
.pn h4 .al { position: absolute; right: 10px; top: 4px; }
.pn h4::after { right: 1px; top: 1px; }
.pn h4.lft { text-align: left; padding-left: 7px; }
.heads { height: 34px; margin-top: -10px; display: flex; justify-content: flex-end; gap: 8px; line-height: 36px; }
.heads span { width: 72px; text-align: center; white-space: nowrap; }
.pn output + output { margin-left: 8px; }
.water { width: 512px; height: 176px; padding-right: 59px; } .pn.water h4 { margin-right: -59px; line-height: 33px; } .water .heads span { position: relative; left: 3px; }
.ram .heads span { position: relative; left: 1px; }
.cols { display: flex; gap: 16px; }
.ram { height: 200px; } .pres { height: 144px; } .sc { height: 136px; } .hmo { height: 176px; }
.ram .row span, .pres .row span { padding-right: 14px; } .mc .row span, .hmo .row span { padding-right: 11px; } .mc .btu span { padding-right: 6px; }
.l2 span { padding-top: 0; line-height: 19px; } .l2 .slot { padding-top: 1px; } .l2 svg { margin: 7px 0 0 -5px; }
.l2 .box { background: linear-gradient(135deg, #000 3px, #f2f2f2 3px); }

/* message line and footer */
.msg { height: 30px; flex: none; background: #fff; border: 2px solid #808080; border-width: 2px 2px 1px 0; }
.msg button { width: 48px; height: 27px; border: 2px solid #bbb; border-width: 0 2px 1px; background: linear-gradient(#e2e2e2, #ccc); }
.foot { height: 38px; flex: none; display: flex; background: linear-gradient(#686868, #333); color: #fff; font-size: 16px; line-height: 37px; }
.foot a { width: 120px; text-align: center; border-right: 2px solid #000; flex: none; white-space: nowrap; }
.foot .n { width: 85px; background: linear-gradient(#808080, #4c4c4c); font: 15.500px/41px "DejaVu Sans Condensed", sans-serif; }
.foot .dn { line-height: 38px; }
.foot .sp { flex: 1; border-right: 1px solid #000; }
.foot i { width: 50px; border-right: 2px solid #000; flex: none; }
```
